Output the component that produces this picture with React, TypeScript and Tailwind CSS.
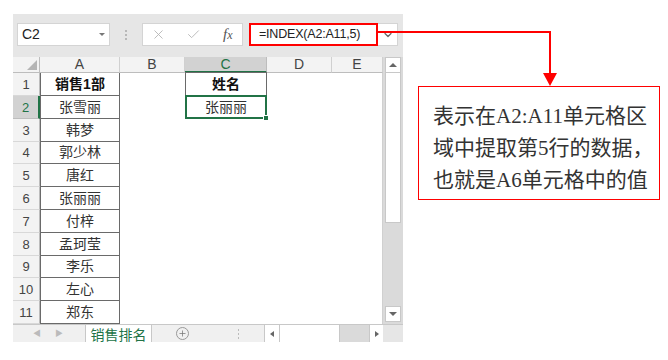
import { ChevronDown, Check, X, Plus } from "lucide-react";

const names = ["销售1部", "张雪丽", "韩梦", "郭少林", "唐红", "张丽丽", "付梓", "孟珂莹", "李乐", "左心", "郑东"];

const sans = "font-['Liberation_Sans','Noto_Sans_CJK_SC',sans-serif]";

function HeaderCell({ label, w, active }: { label: string; w: string; active?: boolean }) {
  return (
    <div
      className={`${w} h-full flex items-center justify-center text-[14px] border-r ${
        active
          ? "bg-[#d2d2d2] text-[#217346] border-[#bdbdbd] border-b-2 border-b-[#217346]"
          : "bg-[#f3f3f3] text-[#444] border-[#d0d0d0] border-b border-b-[#bdbdbd]"
      }`}
    >
      {label}
    </div>
  );
}

function Row({ n, name }: { n: number; name: string }) {
  const active = n === 2;
  // a couple of rows are a pixel shorter so the grid ends where the reference does
  const h = n === 4 || n === 9 ? "h-[22px]" : "h-[23px]";
  return (
    <div className={`flex ${h}`}>
      <div
        className={`w-[27px] h-full flex items-end justify-center pb-[1px] text-[13px] border-b ${
          active
            ? "bg-[#d2d2d2] text-[#217346] border-b-[#bdbdbd] border-r-2 border-r-[#217346]"
            : "bg-[#f3f3f3] text-[#444] border-b-[#d8d8d8] border-r border-r-[#bdbdbd]"
        }`}
      >
        {n}
      </div>
      <div
        className={`w-[80px] h-full flex items-center justify-center text-[14px] border-x border-b border-[#6a6a6a] ${
          n === 1 ? "font-bold text-[#111]" : "text-[#333]"
        }`}
      >
        {name}
      </div>
      <div className="w-[65px] h-full" />
      <div className="w-[82px] h-full relative">
        {n === 1 && (
          <div className="absolute inset-0 -top-px border border-[#6a6a6a] flex items-center justify-center text-[14px] font-bold text-[#111]">
            姓名
          </div>
        )}
        {n === 2 && (
          <div className="absolute inset-0 -top-px border-2 border-[#217346] flex items-center justify-center text-[14px] text-[#333]">
            张丽丽
            <div className="absolute -right-[4px] -bottom-[4px] w-[6px] h-[6px] bg-[#217346] border border-white" />
          </div>
        )}
      </div>
      <div className="w-[65px] h-full" />
      <div className="w-[51px] h-full border-r border-[#d0d0d0]" />
    </div>
  );
}

export default function App() {
  return (
    <div className={`w-[668px] h-[360px] bg-white relative ${sans}`}>
      <div className="flex pt-[14px] pl-[13px]">
        {/* Excel window */}
        <div className="w-[390px] bg-[#e6e6e6] flex flex-col">
          {/* formula bar */}
          <div className="h-[43px] pt-[9px] flex items-start">
            <div className="ml-[4px] w-[93px] h-[23px] bg-white border border-[#d4d4d4] flex items-center pl-[4px] pr-[4px] text-[14px] text-[#222]">
              <span className="flex-1">C2</span>
              <span className="w-0 h-0 border-x-[3px] border-x-transparent border-t-[3px] border-t-[#777]" />
            </div>
            <div className="w-[32px] h-[23px] flex flex-col items-center justify-center gap-[2px]">
              <span className="w-[2px] h-[2px] bg-[#b8b8b8]" />
              <span className="w-[2px] h-[2px] bg-[#b8b8b8]" />
              <span className="w-[2px] h-[2px] bg-[#b8b8b8]" />
            </div>
            <div className="w-[101px] h-[23px] bg-white border border-[#d4d4d4] flex items-center pl-[8px]">
              <X className="w-[15px] h-[15px] text-[#b4b4b4]" strokeWidth={1.4} />
              <Check className="ml-[20px] w-[15px] h-[15px] text-[#b4b4b4]" strokeWidth={1.4} />
              <span className="ml-[22px] text-[15px] italic text-[#555] font-['Liberation_Serif',serif]">
                f<span className="text-[12px]">x</span>
              </span>
            </div>
            <div className="ml-[6px] w-[149px] h-[23px] bg-white flex">
              <div className="w-[129px] h-full border-2 border-[#ff0000] flex items-center pl-[8px] text-[12.5px] tracking-[-0.2px] text-[#222]">
                =INDEX(A2:A11,5)
              </div>
              <div className="flex-1 border border-[#d4d4d4] border-l-0 flex items-center justify-center">
                <ChevronDown className="w-[12px] h-[12px] text-[#666]" strokeWidth={2.5} />
              </div>
            </div>
          </div>
          {/* column headers */}
          <div className="flex h-[16px]">
            <div className="w-[27px] h-full bg-[#f3f3f3] border-r border-b border-[#bdbdbd] flex items-end justify-end p-[2px]">
              <div className="w-0 h-0 border-l-[10px] border-l-transparent border-b-[10px] border-b-[#b5b5b5]" />
            </div>
            <HeaderCell label="A" w="w-[80px]" />
            <HeaderCell label="B" w="w-[65px]" />
            <HeaderCell label="C" w="w-[82px]" active />
            <HeaderCell label="D" w="w-[65px]" />
            <HeaderCell label="E" w="w-[51px]" />
            <div className="w-[20px] h-full bg-[#dadada]">
              <div className="mx-[2px] h-full bg-white border border-[#c8c8c8] flex items-center justify-center">
                <span className="w-0 h-0 border-x-[4px] border-x-transparent border-b-[4px] border-b-[#666]" />
              </div>
            </div>
          </div>
          {/* rows + vertical scrollbar */}
          <div className="flex">
            <div className="bg-white">
              {names.map((name, i) => (
                <Row key={i} n={i + 1} name={name} />
              ))}
            </div>
            <div className="w-[20px] bg-[#dadada] flex flex-col px-[2px]">
              <div className="h-[150px] bg-white border-x border-b border-[#c8c8c8]" />
              <div className="flex-1" />
              <div className="h-[16px] mb-[2px] bg-white border border-[#c8c8c8] flex items-center justify-center">
                <span className="w-0 h-0 border-x-[4px] border-x-transparent border-t-[4px] border-t-[#666]" />
              </div>
            </div>
          </div>
          {/* sheet tabs */}
          <div className="h-[18px] flex border-t border-[#c8c8c8] bg-[#f0f0f0] text-[#bbb]">
            <div className="w-[72px] h-full flex items-center pl-[20px] gap-[14px] text-[8px]">
              <span>◀</span>
              <span>▶</span>
            </div>
            <div className="w-[67px] h-full bg-white border-x border-[#c8c8c8] flex items-center justify-center text-[14px] text-[#217346] font-['Noto_Sans_CJK_SC',sans-serif] leading-none">
              销售排名
            </div>
            <div className="w-[60px] h-full flex items-center justify-center">
              <div className="w-[13px] h-[13px] rounded-full border border-[#999] flex items-center justify-center">
                <Plus className="w-[9px] h-[9px] text-[#777]" strokeWidth={2} />
              </div>
            </div>
            <div className="w-[52px] h-full flex flex-col items-center justify-center gap-[2px]">
              <span className="w-[1px] h-[2px] bg-[#bbb]" />
              <span className="w-[1px] h-[2px] bg-[#bbb]" />
              <span className="w-[1px] h-[2px] bg-[#bbb]" />
            </div>
            <div className="w-[119px] h-full flex bg-[#dadada] border-l border-[#c8c8c8]">
              <div className="w-[15px] h-full bg-white border-r border-[#c8c8c8] flex items-center justify-center">
                <span className="w-0 h-0 border-y-[3px] border-y-transparent border-r-[4px] border-r-[#666]" />
              </div>
              <div className="w-[60px] h-full bg-white border-r border-[#c8c8c8]" />
              <div className="flex-1" />
              <div className="w-[14px] h-full bg-white border-l border-[#c8c8c8] flex items-center justify-center">
                <span className="w-0 h-0 border-y-[3px] border-y-transparent border-l-[4px] border-l-[#666]" />
              </div>
            </div>
            <div className="flex-1 bg-[#e6e6e6]" />
          </div>
        </div>

        {/* annotation */}
        <div className="ml-[15px] mt-[72px] w-[242px] h-[114px] border border-[#ff0000] pt-[13px] pl-[14px] text-[21px] leading-[32px] text-[#333] whitespace-nowrap font-['Liberation_Serif','Noto_Sans_CJK_SC',serif]">
          <div>表示在A2:A11单元格区</div>
          <div>域中提取第5行的数据，</div>
          <div>也就是A6单元格中的值</div>
        </div>
      </div>

      {/* connector arrow */}
      <svg className="absolute left-0 top-0 pointer-events-none" width="668" height="360">
        <polyline points="378,32 550,32 550,74" fill="none" stroke="#ff0000" strokeWidth="2" />
        <polygon points="543,73 557,73 550,86" fill="#ff0000" />
      </svg>
    </div>
  );
}
